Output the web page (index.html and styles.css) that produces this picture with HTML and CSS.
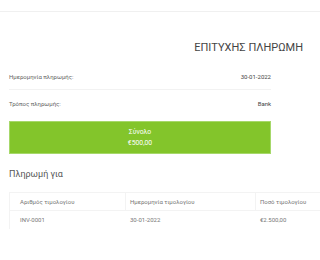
FILE: index.html
```html
<!DOCTYPE html>
<html lang="el">

<head>
  <meta charset="UTF-8">
  <meta name="viewport" content="width=device-width, initial-scale=1.0">
  <title>Επιτυχής πληρωμή</title>
  <link rel="stylesheet" href="styles.css">
</head>

<body>
  <div class="topbar"></div>
  <div class="page">
    <h1 class="title">ΕΠΙΤΥΧΗΣ ΠΛΗΡΩΜΗ</h1>

    <div class="details">
      <div class="row">
        <span class="label">Ημερομηνία πληρωμής:</span>
        <span class="value">30-01-2022</span>
      </div>
      <div class="row">
        <span class="label">Τρόπος πληρωμής:</span>
        <span class="value">Bank</span>
      </div>
      <div class="total">
        <div>Σύνολο</div>
        <div>€500,00</div>
      </div>
    </div>

    <h2 class="subtitle">Πληρωμή για</h2>

    <div class="table-wrap">
      <table class="invoices">
        <thead>
          <tr>
            <th class="col-num">Αριθμός τιμολογίου</th>
            <th class="col-date">Ημερομηνία τιμολογίου</th>
            <th class="col-amount">Ποσό τιμολογίου</th>
          </tr>
        </thead>
        <tbody>
          <tr>
            <td>INV-0001</td>
            <td>30-01-2022</td>
            <td>€2.500,00</td>
          </tr>
        </tbody>
      </table>
    </div>
  </div>
</body>

</html>
```

FILE: styles.css
```css
body {
  margin: 0;
  font-family: Roboto, 'Noto Sans', sans-serif;
  background: #fff;
  color: #666;
  width: 320px;
  height: 260px;
  overflow: hidden;
}

.topbar {
  height: 11px;
  border-bottom: 1px solid #f0f0f0;
}

.page {
  padding-left: 9px;
}

.title {
  width: 294px;
  margin: 29px 0 0;
  text-align: right;
  font-size: 11px;
  font-weight: 400;
  line-height: 13px;
  color: #444;
}

.details {
  width: 262px;
  margin-top: 9px;
}

.row {
  display: flex;
  justify-content: space-between;
  align-items: center;
  height: 26px;
  font-size: 6px;
  color: #666;
}

.row + .row {
  border-top: 1px solid #f2f2f2;
}

.value {
  color: #444;
}

.total {
  margin-top: 5px;
  height: 33px;
  background: #83c52b;
  border: 1px solid #a6d86a;
  box-sizing: border-box;
  color: #fff;
  font-size: 6.8px;
  line-height: 11px;
  text-align: center;
  padding-top: 5px;
}

.subtitle {
  margin: 15px 0 0;
  font-size: 9px;
  font-weight: 400;
  line-height: 11px;
  color: #555;
}

.table-wrap {
  width: 311px;
  overflow: hidden;
  margin-top: 12px;
}

.invoices {
  border-collapse: collapse;
  width: 340px;
  font-size: 6px;
  color: #777;
}

.invoices th,
.invoices td {
  text-align: left;
  font-weight: 400;
  padding: 0 4px;
  height: 17px;
  border: 1px solid #f3f3f3;
  border-left: none;
}

.invoices th:first-child,
.invoices td:first-child {
  border-left: 1px solid #f3f3f3;
  padding-left: 10px;
}

.invoices td {
  border-right-color: transparent;
  border-bottom-color: transparent;
}

.col-num {
  width: 101px;
}

.col-date {
  width: 121px;
}
```
